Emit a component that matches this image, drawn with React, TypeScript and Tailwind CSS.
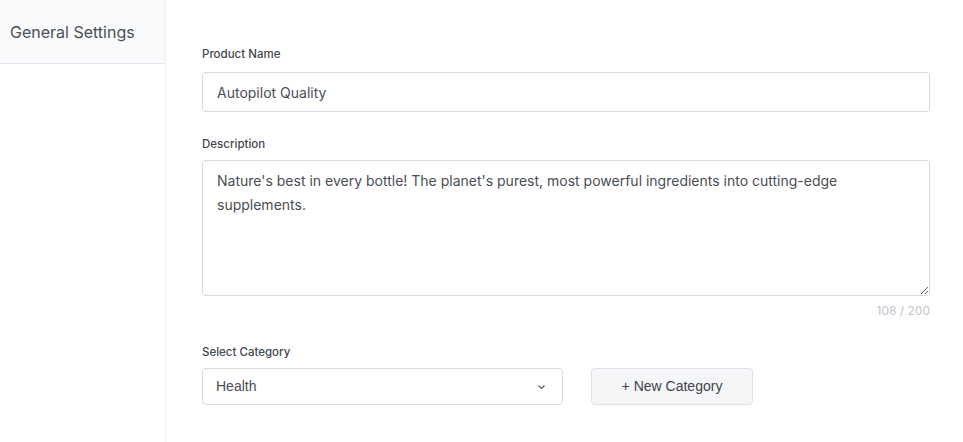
import React from "react";

export default function App() {
  return (
    <div className="flex w-[963px] h-[442px] bg-white overflow-hidden" style={{ fontFamily: "Inter, 'Noto Sans', sans-serif" }}>
      <aside className="w-[166px] shrink-0 border-r border-[#eeeff2] h-full">
        <div className="h-[64px] bg-[#f9fafc] border-b border-[#e6e8ec] flex items-center pl-[10px] pt-[1px]">
          <span className="text-[16px] text-[#4b4f56]">General Settings</span>
        </div>
      </aside>
      <main className="flex-1 pl-[36px] pr-[33px] pt-[46px]">
        <label className="block text-[11.5px] leading-4 font-medium text-[#43474e] mb-[10px]">Product Name</label>
        <input
          readOnly
          value="Autopilot Quality"
          className="block w-full h-[40px] px-[14px] border border-[#d9dbe1] rounded-[4px] text-[14px] text-[#4a4e55] outline-none"
        />
        <label className="block text-[11.5px] leading-4 font-medium text-[#43474e] mt-[24px] mb-[8px]">Description</label>
        <textarea
          readOnly
          value="Nature's best in every bottle! The planet's purest, most powerful ingredients into cutting-edge supplements."
          className="block w-full h-[136px] px-[14px] py-[8px] border border-[#d9dbe1] rounded-[4px] text-[14px] leading-6 text-[#4a4e55] outline-none resize-y"
        />
        <div className="text-right text-[12px] leading-4 text-[#c2c5cb] mt-[7px]">108 / 200</div>
        <label className="block text-[11.5px] leading-4 font-medium text-[#43474e] mt-[25px] mb-[8px]">Select Category</label>
        <div className="flex items-center gap-[28px]">
          <div className="relative w-[361px] h-[37px] border border-[#d9dbe1] rounded-[4px] flex items-center pl-[13px] pr-[14px] justify-between">
            <span className="text-[14px] text-[#4a4e55]" style={{ fontFamily: "'Liberation Sans', Arial, sans-serif" }}>Health</span>
            <svg width="9" height="6" viewBox="0 0 9 6" className="mr-[2px]">
              <path d="M1.5 1.5 L4.5 4.5 L7.5 1.5" fill="none" stroke="#555a61" strokeWidth="1.2" />
            </svg>
          </div>
          <button className="w-[162px] h-[37px] border border-[#dfe1e5] rounded-[4px] bg-[#f5f6f8] text-[14px] text-[#3f434a]" style={{ fontFamily: "'Liberation Sans', Arial, sans-serif" }}>
            + New Category
          </button>
        </div>
      </main>
    </div>
  );
}
